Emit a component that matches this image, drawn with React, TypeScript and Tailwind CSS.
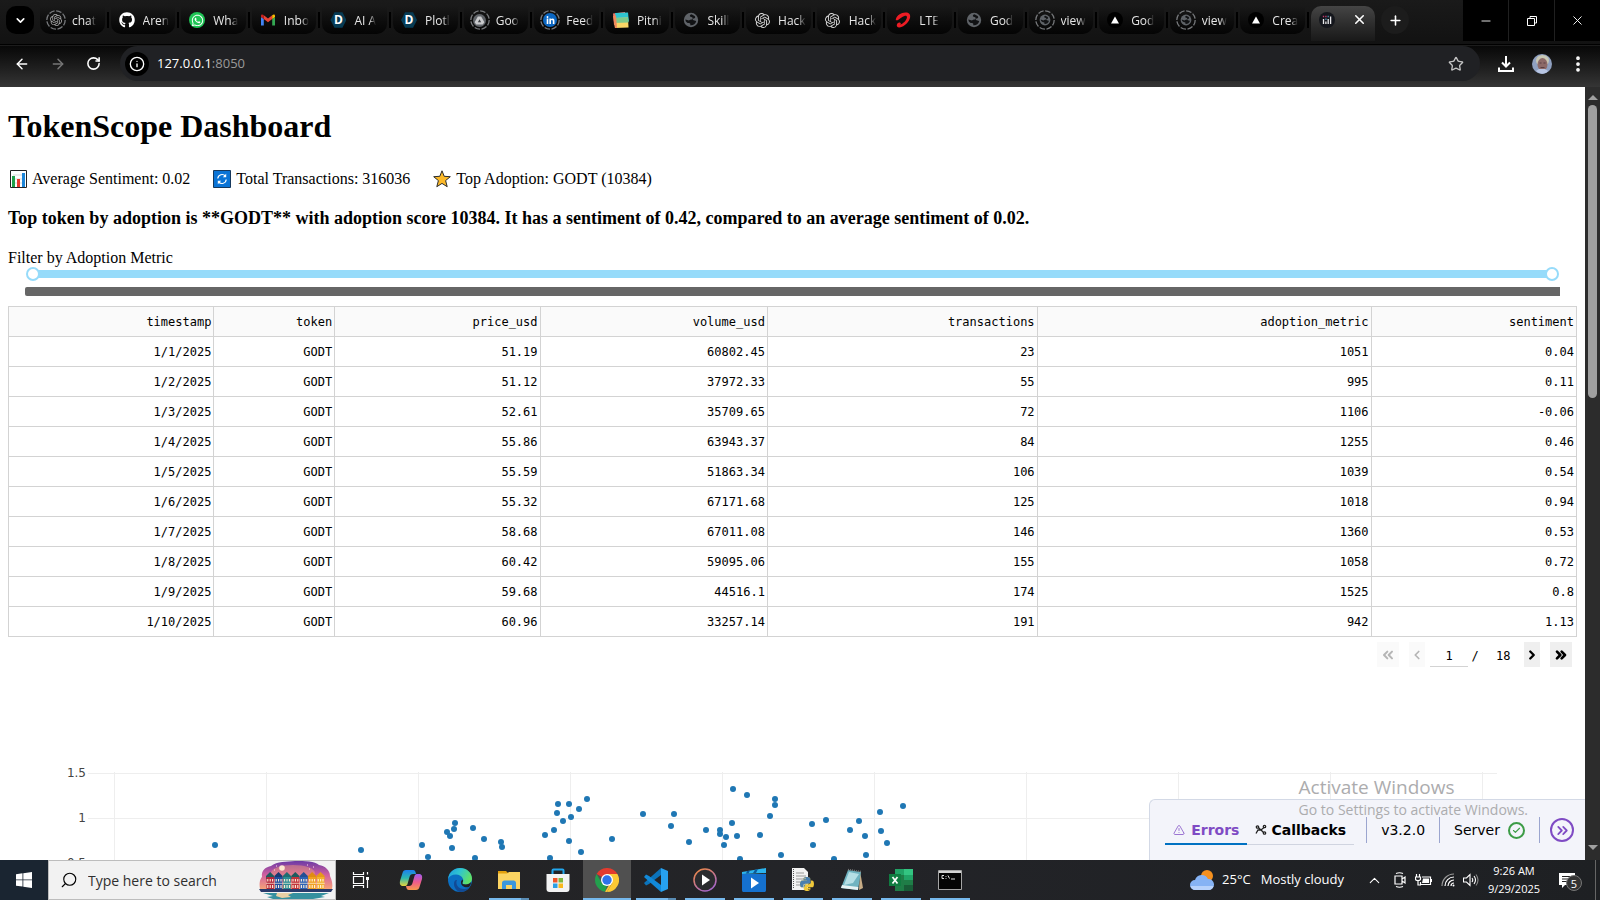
import { ReactNode } from "react";
import { FaGithub, FaLinkedinIn, FaWhatsapp, FaPython } from "react-icons/fa";
import { SiOpenai } from "react-icons/si";
import {
  ArrowLeft,
  ArrowRight,
  RotateCw,
  Info,
  Star,
  EllipsisVertical,
  ChevronDown,
  ChevronUp,
  ChevronLeft,
  ChevronRight,
  ChevronsLeft,
  ChevronsRight,
  Plus,
  X,
  Minus,
  TriangleAlert,
  Check,
  Search,
} from "lucide-react";

/* ---------- favicons ---------- */

function Ring({ children }: { children: ReactNode }) {
  return (
    <span className="relative flex h-4 w-4 items-center justify-center">
      <svg viewBox="0 0 20 20" className="absolute -left-0.5 -top-0.5 h-5 w-5">
        <circle cx="10" cy="10" r="9.2" fill="none" stroke="#77797c" strokeWidth="1.3" strokeDasharray="5.6 1.6" />
      </svg>
      {children}
    </span>
  );
}

function Globe({ small = false }) {
  return (
    <svg viewBox="0 0 16 16" className={small ? "h-3 w-3" : "h-4 w-4"}>
      <circle cx="8" cy="8" r="7.2" fill="#5f6368" />
      <path d="M8.5 2.2c-2 .5-2 2-1 2.6s2.400.4 2.200 1.800-3.200 1-3.700 2L2.300 7.400c.3 2.600 2 3.600 3.600 3.600s1.600 1 1.300 2.300c3 .3 5.200-1 6-4-1-1-2.400-.6-3.200-1.300s.2-1.500 1.400-1.700.8-1.800.2-2.400z" fill="#111214" />
    </svg>
  );
}

function Gmail() {
  return (
    <svg viewBox="0 0 16 12" className="h-3 w-4">
      <path d="M1 11.600V3l2.800 2v6.600z" fill="#4285f4" />
      <path d="M12.200 11.600V5L15 3v8.600z" fill="#34a853" />
      <path d="M3.800 5V1.200L8 4.400l4.200-3.200V5L8 8.200z" fill="#ea4335" />
      <path d="M1 3V1.800C1 .2 2.600-.1 3.800 1.200V5z" fill="#c5221f" />
      <path d="M15 3V1.800c0-1.600-1.600-1.900-2.800-.6V5z" fill="#fbbc04" />
    </svg>
  );
}

function Discourse() {
  return (
    <span className="flex h-4 w-4 items-center justify-center bg-[#063b54] text-[12px] leading-none font-bold text-white [clip-path:polygon(25%_2%,75%_2%,100%_50%,75%_98%,25%_98%,0_50%)]">
      D
    </span>
  );
}

function Drive() {
  return (
    <svg viewBox="0 0 16 16" width="13" height="13">
      <circle cx="8" cy="8" r="8" fill="#5f6368" />
      <path d="M6 3h4l4 7-2 3H4l-2-3z" fill="#c9cacc" />
      <path d="M8 6.500 6 10h4z" fill="#3c3f43" />
    </svg>
  );
}

function Pitni() {
  return (
    <svg viewBox="0 0 16 16" className="h-4 w-4">
      <path d="M0 1.500 12 0l1 11L1 13z" fill="#f0776a" />
      <path d="M2 1 15 .4l1 9-12 3z" fill="#2fc4cf" />
      <path d="M1 6l14-.5 .5 10L2 16z" fill="#f9d566" />
      <path d="M1 6l14-.5 .2 5L1.500 11z" fill="#7fc98a" />
      <path d="M0 4l3-.5L4 16H2z" fill="#ef8a5c" />
    </svg>
  );
}

function Airtel() {
  return (
    <svg viewBox="0 0 16 16" className="h-4 w-4">
      <path d="M.8 7.500C1.500 3.500 6 .6 10.500.6c3.500 0 5.200 2 4.600 4.900-.8 4-5.400 9.300-10.600 9.900-2.200.2-3.100-1.200-2.600-2.900.5-1.500 2.200-2.400 3.400-1.700.9.500.6 1.600-.3 2 3-.8 6.400-4.400 6.900-7 .3-1.600-.7-2.200-2.400-1.900C6.900 4.400 5.300 6.500 3.400 7.800c-1.200.8-2.800.8-2.600-.3z" fill="#ed1c24" />
    </svg>
  );
}

function Vercel() {
  return (
    <span className="flex h-4 w-4 items-center justify-center rounded-full bg-black">
      <svg viewBox="0 0 10 10" className="h-2 w-2">
        <path d="M5 .5 10 9.300H0z" fill="#fff" />
      </svg>
    </span>
  );
}

function PlotlyIcon() {
  return (
    <svg viewBox="0 0 16 16" className="h-4 w-4">
      <circle cx="8" cy="8" r="8" fill="#14161c" />
      <path d="M4.500 7v5M6.900 9.500V12M9.200 7v5M11.600 4.500V12" stroke="#e8e8ea" strokeWidth="1.300" />
      <path d="M4.500 3.800v1.400M6.900 3.800v1.400" stroke="#c43e6f" strokeWidth="1.300" />
      <path d="M9.200 3.800v1.400M6.900 6.500v1.400" stroke="#4c8fae" strokeWidth="1.300" />
    </svg>
  );
}

const tabs = [
  { title: "chat", icon: <Ring><SiOpenai className="text-[#a9a9a9]" size={12} /></Ring> },
  { title: "Aren", icon: <FaGithub className="text-white" size={16} /> },
  {
    title: "Wha",
    icon: (
      <span className="flex h-4 w-4 items-center justify-center rounded-full bg-[#1fc455]">
        <FaWhatsapp className="text-white" size={13} />
      </span>
    ),
  },
  { title: "Inbo", icon: <Gmail /> },
  { title: "AI A", icon: <Discourse /> },
  { title: "Plotl", icon: <Discourse /> },
  { title: "Goo", icon: <Ring><Drive /></Ring> },
  {
    title: "Feed",
    icon: (
      <Ring>
        <span className="flex h-3.5 w-3.5 items-center justify-center rounded-full bg-[#0a66c2]">
          <FaLinkedinIn className="text-white" size={9} />
        </span>
      </Ring>
    ),
  },
  { title: "Pitni", icon: <Pitni /> },
  { title: "Skill", icon: <Globe /> },
  { title: "Hack", icon: <SiOpenai className="text-[#d6d6d6]" size={15} /> },
  { title: "Hack", icon: <SiOpenai className="text-[#d6d6d6]" size={15} /> },
  { title: "LTE", icon: <Airtel /> },
  { title: "God", icon: <Globe /> },
  { title: "view", icon: <Ring><Globe small /></Ring> },
  { title: "God", icon: <Vercel /> },
  { title: "view", icon: <Ring><Globe small /></Ring> },
  { title: "Crea", icon: <Vercel /> },
];

function TabStrip() {
  return (
    <div className="flex h-[45px] items-start border-b border-black bg-linear-to-b from-[#1a1a1a] to-[#121212] pl-1.5">
      <button aria-label="Search tabs" className="mt-1.5 mr-1.5 flex h-7 w-7 shrink-0 items-center justify-center rounded-[10px] bg-black text-white">
        <ChevronDown size={13} strokeWidth={3} />
      </button>
      <div className="flex min-w-0 flex-1 pt-1.5">
        {tabs.map((t, i) => (
          <div key={i} className="flex min-w-0 flex-1 items-center">
            <button className="flex h-7 min-w-0 flex-1 items-center gap-2 rounded-b-[10px] bg-linear-to-b from-transparent to-black/80 pl-2 text-xs text-[#e6e6e6]">
              <span className="flex w-4 shrink-0 justify-center">{t.icon}</span>
              <span className="min-w-0 pt-0.5 whitespace-nowrap [mask-image:linear-gradient(to_right,black_70%,transparent)]">
                {t.title}
              </span>
            </button>
            <span className="mx-0.5 h-4 w-0.5 shrink-0 bg-black" />
          </div>
        ))}
      </div>
      <div className="mt-1.5 flex h-[35px] w-16 shrink-0 items-start justify-between rounded-t-[10px] bg-linear-to-b from-[#454545] to-[#191919] px-2 pt-1.5">
        <PlotlyIcon />
        <button aria-label="Close tab" className="text-white">
          <X size={15} strokeWidth={2.5} />
        </button>
      </div>
      <button aria-label="New tab" className="mt-1.5 ml-1.5 flex h-7 w-7 shrink-0 items-center justify-center rounded-full bg-[#1c1c1c] text-white">
        <Plus size={15} strokeWidth={2.5} />
      </button>
      <div className="ml-[54px] flex h-[41px] shrink-0 gap-px bg-[#202020] text-white">
        <button aria-label="Minimize" className="flex w-[45px] items-center justify-center bg-black">
          <Minus size={14} strokeWidth={1.5} />
        </button>
        <button aria-label="Restore" className="flex w-[45px] items-center justify-center bg-black">
          <svg viewBox="0 0 12 12" className="h-3 w-3" fill="none" stroke="currentColor">
            <path d="M1.500 3.500h7v7h-7zM4 3.500v-2h6.500V8H8.500" />
          </svg>
        </button>
        <button aria-label="Close" className="flex w-[45px] items-center justify-center bg-black">
          <X size={15} strokeWidth={1.5} />
        </button>
      </div>
    </div>
  );
}

function Toolbar() {
  return (
    <div className="flex h-[42px] items-center border-t border-[#1c1c1c] bg-linear-to-b from-[#080808] to-[#353535] pb-1.5 text-white">
      <button aria-label="Back" className="ml-3.5 w-4"><ArrowLeft size={16} strokeWidth={2.2} /></button>
      <button aria-label="Forward" className="ml-5 w-4 text-[#777]"><ArrowRight size={16} strokeWidth={2.2} /></button>
      <button aria-label="Reload" className="ml-5 w-4"><RotateCw size={15} strokeWidth={2.5} /></button>
      <div className="ml-[18px] flex h-[35px] flex-1 items-center rounded-full bg-[#202124] pl-[5px] pr-4">
        <button aria-label="Site information" className="flex h-6 w-6 items-center justify-center rounded-full bg-black">
          <Info size={16} />
        </button>
        <a href="#" className="ml-2 flex-1 text-[13px]">
          <span className="text-white">127.0.0.1</span>
          <span className="text-[#9a9a9a]">:8050</span>
        </a>
        <button aria-label="Bookmark" className="text-[#c4c4c4]"><Star size={16} /></button>
      </div>
      <button aria-label="Downloads" className="ml-[18px]">
        <svg viewBox="0 0 16 16" className="h-4 w-4" fill="none" stroke="currentColor" strokeWidth="2">
          <path d="M8 0v10M4 6.500l4 4 4-4M1 11.500V15h14v-3.500" />
        </svg>
      </button>
      <button aria-label="Profile" className="ml-[18px]">
        <svg viewBox="0 0 20 20" className="h-5 w-5">
          <circle cx="10" cy="10" r="10" fill="#8fa0c0" />
          <ellipse cx="10.500" cy="6.500" rx="6.500" ry="5.500" fill="#c9c8b4" />
          <ellipse cx="10.500" cy="10.500" rx="5" ry="6.500" fill="#8d6a68" />
          <path d="M4 17c3 3 9 4 12 0l-3-2H7z" fill="#b8c6e4" />
          <path d="M7.500 9h2M11.500 9h2M8.500 13.500h4" stroke="#5a3f42" />
        </svg>
      </button>
      <button aria-label="Menu" className="ml-4 mr-3"><EllipsisVertical size={20} strokeWidth={2.500} /></button>
    </div>
  );
}

/* ---------- dashboard ---------- */

const columns = ["timestamp", "token", "price_usd", "volume_usd", "transactions", "adoption_metric", "sentiment"];

const rows = [
  ["1/1/2025", "GODT", "51.19", "60802.45", "23", "1051", "0.04"],
  ["1/2/2025", "GODT", "51.12", "37972.33", "55", "995", "0.11"],
  ["1/3/2025", "GODT", "52.61", "35709.65", "72", "1106", "-0.06"],
  ["1/4/2025", "GODT", "55.86", "63943.37", "84", "1255", "0.46"],
  ["1/5/2025", "GODT", "55.59", "51863.34", "106", "1039", "0.54"],
  ["1/6/2025", "GODT", "55.32", "67171.68", "125", "1018", "0.94"],
  ["1/7/2025", "GODT", "58.68", "67011.08", "146", "1360", "0.53"],
  ["1/8/2025", "GODT", "60.42", "59095.06", "155", "1058", "0.72"],
  ["1/9/2025", "GODT", "59.68", "44516.1", "174", "1525", "0.8"],
  ["1/10/2025", "GODT", "60.96", "33257.14", "191", "942", "1.13"],
];

const points = [
  [215, 845], [361, 850], [422, 845], [428, 857], [447, 832], [450, 836], [454, 829], [455, 823], [452, 848],
  [473, 828], [484, 839], [501, 842], [502, 847], [475, 858], [545, 835], [554, 830], [550, 858], [557, 813],
  [558, 804], [569, 804], [563, 821], [571, 817], [579, 809], [587, 799], [569, 841], [581, 852], [612, 839],
  [643, 814], [674, 814], [671, 826], [689, 842], [706, 830], [720, 830], [720, 834], [726, 837], [724, 845],
  [732, 823], [737, 836], [733, 789], [747, 795], [740, 859], [760, 835], [770, 816], [775, 799], [775, 805],
  [781, 855], [812, 824], [813, 845], [826, 820], [834, 859], [850, 830], [859, 821], [865, 836], [866, 855],
  [880, 812], [881, 831], [887, 843], [903, 806],
];

const gridX = [114, 266, 418, 570, 722, 874, 1026, 1178, 1330, 1482];

const thumb =
  "col-start-1 row-start-1 h-3.5 w-full appearance-none bg-transparent pointer-events-none [&::-webkit-slider-thumb]:pointer-events-auto [&::-webkit-slider-thumb]:h-3.5 [&::-webkit-slider-thumb]:w-3.5 [&::-webkit-slider-thumb]:appearance-none [&::-webkit-slider-thumb]:rounded-full [&::-webkit-slider-thumb]:border-2 [&::-webkit-slider-thumb]:border-[#96dbfa] [&::-webkit-slider-thumb]:bg-white";

function Stat({ icon, children }: { icon: ReactNode; children: ReactNode }) {
  return (
    <span className="flex items-center gap-1">
      <span className="flex w-5 justify-center">{icon}</span>
      {children}
    </span>
  );
}

function Stats() {
  return (
    <div className="mt-[22px] flex h-6 shrink-0 items-center gap-[22px]">
      <Stat
        icon={
          <svg viewBox="0 0 17 18" className="h-[18px] w-[17px]">
            <path d="M.5.5h16v17H.5z" fill="#fff" stroke="#222" />
            <path d="M3 5h11M3 9h11M3 13h11" stroke="#d9d9d9" />
            <path d="M2 6h3v11H2z" fill="#1fa14a" />
            <path d="M7 9h3v8H7z" fill="#e8382d" />
            <path d="M12 3h3v14h-3z" fill="#1d86d8" />
          </svg>
        }
      >
        Average Sentiment: 0.02
      </Stat>
      <Stat
        icon={
          <svg viewBox="0 0 18 18" className="h-[18px] w-[18px]">
            <path d="M.5.5h17v17H.5z" fill="#0a74d6" stroke="#16385c" />
            <path d="M4.800 8.500a4.300 4.300 0 0 1 7.500-2.500M13.200 9.500a4.300 4.300 0 0 1-7.500 2.500" fill="none" stroke="#fff" strokeWidth="1.200" />
            <path d="M13.200 3.800v3.400H9.800zM4.800 14.200v-3.400h3.400z" fill="#fff" />
          </svg>
        }
      >
        Total Transactions: 316036
      </Stat>
      <Stat
        icon={
          <svg viewBox="0 0 18 18" className="h-[18px] w-[18px]">
            <path d="m9 .8 2.200 5.500 6.100.4-4.700 3.900 1.600 6.100L9 13.400l-5.200 3.300 1.600-6.100L.7 6.700l6.100-.4z" fill="#fcb928" stroke="#2b2b2b" />
          </svg>
        }
      >
        Top Adoption: GODT (10384)
      </Stat>
    </div>
  );
}

function TokenTable() {
  return (
    <table className="mt-2.5 w-full table-fixed border-collapse text-right font-['DejaVu_Sans_Mono',monospace] text-xs">
      <colgroup>
        <col className="w-[13.1%]" />
        <col className="w-[7.7%]" />
        <col className="w-[13.1%]" />
        <col className="w-[14.5%]" />
        <col className="w-[17.2%]" />
        <col className="w-[21.3%]" />
        <col className="w-[13.1%]" />
      </colgroup>
      <thead>
        <tr className="bg-[#fafafa]">
          {columns.map((c) => (
            <th key={c} className="h-[30px] border border-[#d3d3d3] p-0 pr-0.5 font-normal">{c}</th>
          ))}
        </tr>
      </thead>
      <tbody>
        {rows.map((row) => (
          <tr key={row[0]}>
            {row.map((cell, i) => (
              <td key={i} className="h-[30px] border border-[#d3d3d3] p-0 pr-0.5">{cell}</td>
            ))}
          </tr>
        ))}
      </tbody>
    </table>
  );
}

function Pager() {
  return (
    <div className="mt-[5px] flex h-[25px] shrink-0 items-center justify-end pr-[5px] font-['DejaVu_Sans_Mono',monospace] text-xs">
      <button disabled aria-label="First page" className="flex h-full w-[22px] items-center justify-center bg-[#fafafa] text-[#b5b5b5]">
        <ChevronsLeft size={16} strokeWidth={3} />
      </button>
      <button disabled aria-label="Previous page" className="ml-2.5 flex h-full w-4 items-center justify-center bg-[#fafafa] text-[#b5b5b5]">
        <ChevronLeft size={14} strokeWidth={3} />
      </button>
      <input aria-label="Page" defaultValue="1" className="ml-[5px] h-full w-[38px] border-b border-[#d3d3d3] pt-1 text-center" />
      <span className="ml-0.5 w-2.5 pt-0.5 text-center">/</span>
      <span className="ml-4 w-4 pt-0.5">18</span>
      <button aria-label="Next page" className="ml-3 flex h-full w-4 items-center justify-center bg-[#efefef]">
        <ChevronRight size={14} strokeWidth={4} />
      </button>
      <button aria-label="Last page" className="ml-2.5 flex h-full w-[22px] items-center justify-center bg-[#efefef]">
        <ChevronsRight size={16} strokeWidth={4} />
      </button>
    </div>
  );
}

function ScatterChart() {
  return (
    <svg width="100%" height="450" className="shrink-0 font-['DejaVu_Sans',sans-serif] text-xs" fill="#444">
      <g transform="translate(-8 -667)">
        {gridX.map((x) => (
          <path key={x} d={`M${x + 0.5} 772V1060`} stroke="#eee" />
        ))}
        <path d="M88 773.500H1497M88 818.500H1497M88 863.500H1497" stroke="#eee" />
        <text x="86" y="777" textAnchor="end">1.5</text>
        <text x="86" y="822" textAnchor="end">1</text>
        <text x="86" y="867" textAnchor="end">0.5</text>
        {points.map(([x, y], i) => (
          <circle key={i} cx={x} cy={y} r="3" fill="#1f77b4" />
        ))}
      </g>
    </svg>
  );
}

function DevTools() {
  return (
    <div className="absolute right-0 bottom-0 flex h-[61px] items-center rounded-tl-md border-t border-l border-[#d3d9e6] bg-[#f3f4fa] pl-[15px] pr-[11px] font-['DejaVu_Sans',sans-serif] text-sm">
      <div className="flex h-[29px] items-start border-b border-[#d0d4e0]">
        <button className="flex h-[29px] items-start gap-1.5 border-b-2 border-[#0071c2] px-2 pt-1 font-bold text-[#7f4bc4]">
          <TriangleAlert size={12} strokeWidth={1.5} className="mt-1" />
          Errors
        </button>
        <button className="flex h-[29px] items-start gap-1 px-2 pt-1 font-bold">
          <svg viewBox="0 0 12 12" className="mt-1 h-3 w-3" fill="none" stroke="#222" strokeWidth="1.300">
            <circle cx="2.500" cy="3" r="1.200" />
            <circle cx="9.500" cy="2.500" r="1.200" />
            <circle cx="9.500" cy="9" r="1.200" />
            <path d="M3.500 3.800 6 6l3-2.500M6 6l2.500 2.500M6 6H3l-2 3.500" />
          </svg>
          Callbacks
        </button>
      </div>
      <span className="ml-3 h-[26px] w-px bg-[#9ba5cf]" />
      <span className="mx-3.5">v3.2.0</span>
      <span className="h-[26px] w-px bg-[#9ba5cf]" />
      <span className="ml-3.5">Server</span>
      <span className="ml-2 flex h-[17px] w-[17px] items-center justify-center rounded-full border-2 border-[#3c9c46] text-[#3c9c46]">
        <Check size={9} strokeWidth={3} />
      </span>
      <span className="mx-3.5 h-[26px] w-px bg-[#9ba5cf]" />
      <button aria-label="Collapse" className="-ml-1 flex h-6 w-6 items-center justify-center rounded-full border-2 border-[#7f4bc4] text-[#7f4bc4]">
        <ChevronsRight size={17} strokeWidth={2.5} />
      </button>
    </div>
  );
}

function Dashboard() {
  return (
    <div className="relative flex min-h-0 flex-1 bg-white">
      <main className="flex min-w-0 flex-1 flex-col overflow-hidden px-2 font-['Liberation_Serif',serif] text-base text-black">
        <h1 className="mt-[21px] shrink-0 text-[32px] leading-[37px] font-bold">TokenScope Dashboard</h1>
        <Stats />
        <h3 className="mt-4 shrink-0 text-[18px] leading-[22px] font-bold">
          Top token by adoption is **GODT** with adoption score 10384. It has a sentiment of 0.42, compared to an average sentiment of 0.02.
        </h3>
        <label htmlFor="adoption-min" className="mt-5 shrink-0 leading-[18px]">Filter by Adoption Metric</label>
        <div className="mx-[18px] grid shrink-0 items-center">
          <div className="col-start-1 row-start-1 mx-[7px] h-2 rounded-full bg-[#96dbfa]" />
          <input id="adoption-min" type="range" defaultValue={0} className={thumb} />
          <input aria-label="Maximum adoption metric" type="range" defaultValue={100} className={thumb} />
        </div>
        <div className="mx-[17px] mt-1.5 h-[9px] shrink-0 rounded-l-xs bg-[#666]" />
        <TokenTable />
        <Pager />
        <ScatterChart />
      </main>
      <div className="flex w-[15px] flex-col items-center bg-[#2c2c2c] py-1">
        <span className="mt-1 h-0 w-0 border-x-[5px] border-b-[5px] border-x-transparent border-b-[#9f9f9f]" />
        <div className="mt-[5px] h-[293px] w-[9px] rounded-full bg-[#9f9f9f]" />
        <span className="mt-auto mb-1.5 h-0 w-0 border-x-[5px] border-t-[5px] border-x-transparent border-t-[#9f9f9f]" />
      </div>
      <div className="absolute right-[15px] bottom-0">
        <DevTools />
      </div>
      <div className="pointer-events-none absolute right-[72px] bottom-10 whitespace-nowrap text-[#acacae]">
        <p className="text-[19px] leading-[26px]">Activate Windows</p>
        <p className="text-[14px] leading-5">Go to Settings to activate Windows.</p>
      </div>
    </div>
  );
}

/* ---------- taskbar ---------- */

function Houses() {
  const colors = ["#b3273a", "#1d4fa0", "#2a8c93", "#c1343c", "#2d62b5", "#f0a020", "#f3b02f"];
  const roofs = ["#1e5b5e", "#163a73", "#1f6d72", "#1e5b5e", "#234f94", "#e08c12", "#e69a1a"];
  return (
    <svg viewBox="0 0 74 38" className="h-[38px] w-[74px]">
      <defs>
        <linearGradient id="sky" x1="0" y1="0" x2="0" y2="1">
          <stop offset="0" stopColor="#6b3aa5" />
          <stop offset=".5" stopColor="#d1609f" />
          <stop offset="1" stopColor="#f7a277" />
        </linearGradient>
      </defs>
      <path d="M1 28C0 22 1 18 3 16 2 9 7 6 12 5 18 0 28 1 36 0c10 0 20 0 24 4 6 1 11 5 11 11 2 4 3 9 2 13z" fill="url(#sky)" />
      <ellipse cx="34" cy="12" rx="22" ry="8" fill="#f7a277" opacity=".45" />
      <circle cx="23" cy="7" r="2.800" fill="#fde9cf" />
      <path d="M15 9h1M17 5h1M48 4h1M54 6h1M50 8h1" stroke="#ffe3e3" />
      {colors.map((c, i) => (
        <g key={i} transform={`translate(${7 + i * 8.4} 0)`}>
          <path d="M0 15 4.100 11 8.200 15v3H0z" fill={roofs[i]} />
          <path d="M.5 16h7.400v12H.5z" fill={c} />
          <path d="M1.800 18v2.500M4.200 18v2.500M6.600 18v2.500M1.800 24v3M4.200 24v3M6.600 24v3" stroke="#fff3dc" strokeWidth="1.100" />
          <path d="M0 22.300h8.400" stroke="#fff3dc" strokeWidth=".7" />
        </g>
      ))}
      <path d="M0 28h74l-2 3H2z" fill="#283a6b" />
      <path d="M4 32h66l-8 3 4 1-12 2H14l-6-2 6-1z" fill="#36909f" />
      <path d="M18 32h16l-5 2 3 2-9 1-6-2z" fill="#e9cfa4" />
    </svg>
  );
}

function Copilot() {
  return (
    <svg viewBox="0 0 24 24" className="h-6 w-6">
      <defs>
        <linearGradient id="cpa" x1="0" y1="0" x2="0" y2="1">
          <stop offset="0" stopColor="#1b7ff0" />
          <stop offset=".5" stopColor="#2bb7b0" />
          <stop offset="1" stopColor="#e8d53a" />
        </linearGradient>
        <linearGradient id="cpb" x1="0" y1="0" x2="0" y2="1">
          <stop offset="0" stopColor="#a05cf0" />
          <stop offset=".5" stopColor="#ee5a8d" />
          <stop offset="1" stopColor="#f79a4b" />
        </linearGradient>
      </defs>
      <path d="M7 2h7c2 0 2.500 1.500 3 4h-3c-2 0-3 1-3.500 3L8.500 16c-.5 1.500-1.500 2-3 2H4c-3 0-3.500-2.500-3-5l2.500-8C4 3 5 2 7 2z" fill="url(#cpa)" />
      <path d="M17 22h-7c-2 0-2.500-1.500-3-4h3c2 0 3-1 3.500-3l2-7c.5-1.500 1.500-2 3-2H20c3 0 3.500 2.500 3 5l-2.500 8c-.5 2-1.500 3-3.500 3z" fill="url(#cpb)" />
    </svg>
  );
}

function Edge() {
  return (
    <svg viewBox="0 0 24 24" className="h-6 w-6">
      <defs>
        <linearGradient id="edg" x1="0" y1="0" x2="1" y2=".4">
          <stop offset="0" stopColor="#1c9ae0" />
          <stop offset=".5" stopColor="#30c5d0" />
          <stop offset="1" stopColor="#5fe06a" />
        </linearGradient>
      </defs>
      <circle cx="12" cy="12" r="12" fill="#0b6fc2" />
      <path d="M0 11C1 4 6 0 12 0c7 0 12 5 12 10.500 0 4-3 6-6.500 6-2.500 0-3.500-1-3-2 .8-.8 1-2 .5-3.500C14 8 11 6.500 8 6.500 4 6.500 1 8.500 0 11z" fill="url(#edg)" />
      <path d="M9 12c-2 4 1 9 7 9 2.500 0 4.500-.8 6-2-2 3.200-6 5-10 5-4-1-6-5-6-8s1.500-4.500 3-4z" fill="#124a94" />
      <path d="M14.500 14.500c-.5 1 .5 2 3 2 2.500 0 4.500-1 5.500-2.500 0 2-1 4-2 5-4 1-8-1-8-4.500 0-2 1-2.500 1.700-3 .5 1.300.3 2.200-.2 3z" fill="#212124" />
    </svg>
  );
}

function Explorer() {
  return (
    <svg viewBox="0 0 22 20" className="h-5 w-[22px]">
      <path d="M0 1h8l2 2v4H0z" fill="#e3a00d" />
      <path d="M0 3.500h9L11 2h11v17H0z" fill="#fcd462" />
      <path d="M4 19v-6c0-1.500 1-2.500 2.500-2.500h9c1.500 0 2.500 1 2.500 2.500v6h-4v-4H8v4z" fill="#3b97dc" />
    </svg>
  );
}

function Store() {
  return (
    <svg viewBox="0 0 24 24" className="h-6 w-6">
      <path d="M6.500 6V2.500c0-.6.400-1 1-1h9c.6 0 1 .4 1 1V6" fill="none" stroke="#22a7ee" strokeWidth="2" />
      <path d="M.5 6h23v15c0 2-1 3-3 3h-17c-2 0-3-1-3-3z" fill="#f3f3f3" />
      <path d="M7 10h4.500v4.500H7z" fill="#ef5426" />
      <path d="M12.500 10H17v4.500h-4.500z" fill="#7eb83c" />
      <path d="M7 15.500h4.500V20H7z" fill="#2b9fe4" />
      <path d="M12.500 15.500H17V20h-4.500z" fill="#f8b81c" />
    </svg>
  );
}

function Chrome() {
  return (
    <svg viewBox="0 0 24 24" className="h-6 w-6">
      <path d="M12 12 1.600 6A12 12 0 0 1 22.400 6z" fill="#e33b2e" />
      <path d="M12 12V6h10.400A12 12 0 0 1 12 24l5.200-9z" fill="#fcc934" />
      <path d="M1.600 6 6.800 15 12 18l-2 5.800A12 12 0 0 1 1.600 6z" fill="#23a04d" />
      <path d="M17.200 15 12 24l-2-.2L14 17z" fill="#fcc934" />
      <circle cx="12" cy="12" r="6" fill="#fff" />
      <circle cx="12" cy="12" r="4.700" fill="#2f73ea" />
    </svg>
  );
}

function VsCode() {
  return (
    <svg viewBox="0 0 24 24" className="h-6 w-6">
      <path d="m17 0 7 3v18l-7 3z" fill="#27a1ef" />
      <path d="M17 0 0 15l2 2.500 3-1.500L17 7z" fill="#0b73bb" />
      <path d="M17 24 0 9l2-2.500L5 8l12 9z" fill="#1289d8" />
    </svg>
  );
}

function MediaPlayer() {
  return (
    <svg viewBox="0 0 24 24" className="h-6 w-6">
      <defs>
        <linearGradient id="mp" x1="0" y1="0" x2=".6" y2="1">
          <stop offset="0" stopColor="#f28a3c" />
          <stop offset="1" stopColor="#a868c8" />
        </linearGradient>
      </defs>
      <circle cx="12" cy="12" r="11" fill="#2a2b2e" stroke="url(#mp)" strokeWidth="1.500" />
      <path d="m9 6.500 8 5.500-8 5.500z" fill="#fff" />
    </svg>
  );
}

function Movies() {
  return (
    <svg viewBox="0 0 24 24" className="h-6 w-6">
      <path d="M0 4 24 0v5L0 6z" fill="#2bb4ef" />
      <path d="m5 3 3-.5-1.500 3H4zm8-1.300 3-.6-2 4h-3z" fill="#0c5a9c" />
      <path d="M0 6h24v16c0 1.500-.5 2-2 2H2c-1.500 0-2-.5-2-2z" fill="#1571cf" />
      <path d="m9 9.500 8 5.500-8 5.500z" fill="#fff" />
    </svg>
  );
}

function PythonFile() {
  return (
    <span className="relative block h-6 w-6">
      <svg viewBox="0 0 24 24" className="h-6 w-6">
        <path d="M1 0h12l4 4v18H1z" fill="#f2f2f2" />
        <path d="M2.500 1v20" stroke="#555" strokeDasharray="1 1" />
        <path d="M5 5h8M5 8h10M5 11h8M5 14h4M5 17h4" stroke="#999" />
      </svg>
      <FaPython className="absolute right-0 bottom-0 text-[#f0c83a]" size={16} />
      <FaPython className="absolute right-0 bottom-0 text-[#4a7fb0] [clip-path:polygon(0_0,75%_0,75%_45%,40%_52%,30%_75%,0_75%)]" size={16} />
    </span>
  );
}

function Notepad() {
  return (
    <svg viewBox="0 0 24 24" className="h-6 w-6">
      <path d="M20 3 23 20l-4 2z" fill="#c7ac86" />
      <path d="M8 2 21 4l-3 18-17-2z" fill="#6fb3c0" />
      <path d="m9 4 10 2-6 9-9 2z" fill="#b5dfe5" />
      <path d="m1 20 17 2 .3-3L2 17z" fill="#e6f2f3" />
      <path d="M8 1.500 21 3.500" stroke="#777" strokeWidth="1.500" strokeDasharray="1 1" />
    </svg>
  );
}

function Excel() {
  return (
    <svg viewBox="0 0 24 22" className="h-[22px] w-6">
      <path d="M6 0h18v22H6z" fill="#1f7d47" />
      <path d="M6 0h9v6H6z" fill="#21a366" />
      <path d="M15 0h9v6h-9z" fill="#33c481" />
      <path d="M15 6h9v5h-9z" fill="#21a366" />
      <path d="M15 16h9v6h-9z" fill="#185c37" />
      <path d="M0 5h12v12H0z" fill="#107c41" />
      <path d="m3.500 8 5 6.500m0-6.500-5 6.500" stroke="#fff" strokeWidth="1.700" />
    </svg>
  );
}

function Cmd() {
  return (
    <svg viewBox="0 0 24 20" className="h-5 w-6">
      <path d="M.5.5h23v19H.5z" fill="#050505" stroke="#a5a5a5" />
      <path d="M1 1h22v2H1z" fill="#d4d4d4" />
      <path d="M6 5.500H4v3h2M8 6v.8M8 8v.8M10 5.500l1.500 3M13 9h4" stroke="#ddd" fill="none" />
    </svg>
  );
}

const apps = [
  { name: "Copilot", icon: <Copilot />, state: "off" },
  { name: "Edge", icon: <Edge />, state: "off" },
  { name: "File Explorer", icon: <Explorer />, state: "multi" },
  { name: "Store", icon: <Store />, state: "off" },
  { name: "Chrome", icon: <Chrome />, state: "active" },
  { name: "VS Code", icon: <VsCode />, state: "multi" },
  { name: "Media Player", icon: <MediaPlayer />, state: "on" },
  { name: "Movies", icon: <Movies />, state: "on" },
  { name: "Python", icon: <PythonFile />, state: "on" },
  { name: "Notepad", icon: <Notepad />, state: "on" },
  { name: "Excel", icon: <Excel />, state: "on" },
  { name: "Command Prompt", icon: <Cmd />, state: "on" },
];

function AppButton({ name, icon, state }: { name: string; icon: ReactNode; state: string }) {
  return (
    <button
      aria-label={name}
      className={"flex h-10 w-12 flex-col items-center " + (state === "active" ? "bg-[#505050]" : "")}
    >
      <span className="flex h-[38px] w-full items-center justify-center pt-0.5">{icon}</span>
      {state === "active" && <span className="h-0.5 w-full bg-[#76b9ed]" />}
      {state === "on" && <span className="h-0.5 w-10 bg-[#76b9ed]" />}
      {state === "multi" && <span className="h-0.5 w-10 border-r-8 border-[#5a8db5] bg-[#76b9ed]" />}
    </button>
  );
}

function Taskbar() {
  return (
    <div className="flex h-10 shrink-0 items-center bg-linear-to-r from-[#242322] via-[#232428] to-[#1e2023] text-white">
      <button aria-label="Start" className="flex h-10 w-12 shrink-0 items-center justify-center bg-[#1a2531]">
        <svg viewBox="0 0 16 16" className="h-4 w-4" fill="#fff">
          <path d="M0 2.200 6.500 1.300v6.200H0zM7.300 1.200 16 0v7.500H7.300zM0 8.300h6.500v6.300L0 13.700zM7.300 8.300H16V16l-8.700-1.200z" />
        </svg>
      </button>
      <div className="flex h-10 w-72 shrink-0 items-center border border-[#bdbdbd] bg-[#f2f2f2] pl-[11px] pr-0.5 text-black">
        <Search size={18} strokeWidth={1.5} className="-scale-x-100" />
        <input
          aria-label="Search"
          placeholder="Type here to search"
          className="ml-2.5 w-0 flex-1 bg-transparent text-[14px] placeholder:text-[#2f2f2f]"
        />
        <Houses />
      </div>
      <button aria-label="Task view" className="flex h-10 w-12 items-center justify-center">
        <svg viewBox="0 0 17 16" className="h-4 w-[17px]" fill="none" stroke="#fff" strokeWidth="1.200">
          <path d="M1.500 4.500h10v7h-10zM1.500 0v2.500h10V0M1.500 16v-2.500h10V16M15.500 0v2.500M15.500 8v8" />
          <path d="M14 5h3v3h-3z" fill="#fff" stroke="none" />
        </svg>
      </button>
      <div className="ml-[3px] flex gap-px">
        {apps.map((a) => (
          <AppButton key={a.name} {...a} />
        ))}
      </div>
      <div className="ml-auto flex h-10 items-center">
        <svg viewBox="0 0 24 20" className="h-5 w-6">
          <circle cx="17" cy="6" r="6" fill="#f5901e" />
          <path d="M5 20a5 5 0 0 1 0-10 7 7 0 0 1 13-1 5.500 5.500 0 0 1 1 11z" fill="#86b3f4" />
          <path d="M5 20a5 5 0 0 1-4.500-4h23A5 5 0 0 1 19 20z" fill="#b7d2fb" />
        </svg>
        <span className="ml-2 text-[13px]">25°C</span>
        <span className="ml-2.5 text-[13px]">Mostly cloudy</span>
        <ChevronUp size={17} strokeWidth={1.500} className="ml-[22px]" />
        <svg viewBox="0 0 14 16" className="ml-2.5 h-4 w-3.5" fill="none" stroke="#fff" strokeWidth="1.200">
          <path d="M2 4h7v8H2zM9 7l3-2v6L9 9M3 1.500q3.500-1.500 7 0M3 14.500q3.500 1.500 7 0" />
        </svg>
        <svg viewBox="0 0 17 12" className="ml-2 h-3 w-[17px]" fill="none" stroke="#fff" strokeWidth="1.200">
          <path d="M1.500 0v3M4.500 0v3M.5 3h5v2q0 1.500-2.500 1.500T.5 5zM3 6.500V11h3M7 3h8.500v7.500H5.500V8M16.500 5v3" />
          <path d="M8 4.500h6V9H7z" fill="#fff" stroke="none" />
        </svg>
        <svg viewBox="0 0 14 14" className="ml-[9px] h-3.5 w-3.5" fill="none" stroke="#fff" strokeWidth="1.200">
          <path d="M1 13A12 12 0 0 1 13 1" stroke="#999" />
          <path d="M4 13a9 9 0 0 1 9-9M7 13a6 6 0 0 1 6-6M10 13a3 3 0 0 1 3-3" />
          <circle cx="12.500" cy="12.500" r="1" fill="#fff" stroke="none" />
        </svg>
        <svg viewBox="0 0 16 14" className="ml-2 h-3.5 w-4" fill="none" stroke="#fff" strokeWidth="1.100">
          <path d="M.5 5h3L7 1.500v11L3.500 9h-3zM9 5q1.500 2 0 4M11 3q3 4 0 8" />
          <path d="M13 1.500q4 5.500 0 11" stroke="#888" />
        </svg>
        <div className="ml-1.5 w-[58px] text-center text-[11px] leading-[18px] whitespace-nowrap">
          <p>9:26 AM</p>
          <p>9/29/2025</p>
        </div>
        <button aria-label="Notifications" className="relative ml-4 h-6 w-6">
          <svg viewBox="0 0 16 15" className="h-[15px] w-4">
            <path d="M0 0h16v12H6l-3 3v-3H0z" fill="#fff" />
            <path d="M3 3.500h10M3 6h10M3 8.500h6" stroke="#222" />
          </svg>
          <span className="absolute top-[7px] left-[7px] flex h-4 w-4 items-center justify-center rounded-full border border-[#777] bg-[#333] text-[11px] leading-none">
            5
          </span>
        </button>
        <span className="ml-3 mr-1 h-10 w-px bg-[#666]" />
      </div>
    </div>
  );
}

export default function App() {
  return (
    <div className="flex h-screen flex-col overflow-hidden font-['Open_Sans','Noto_Sans',sans-serif]">
      <header className="shrink-0">
        <TabStrip />
        <Toolbar />
      </header>
      <Dashboard />
      <Taskbar />
    </div>
  );
}
